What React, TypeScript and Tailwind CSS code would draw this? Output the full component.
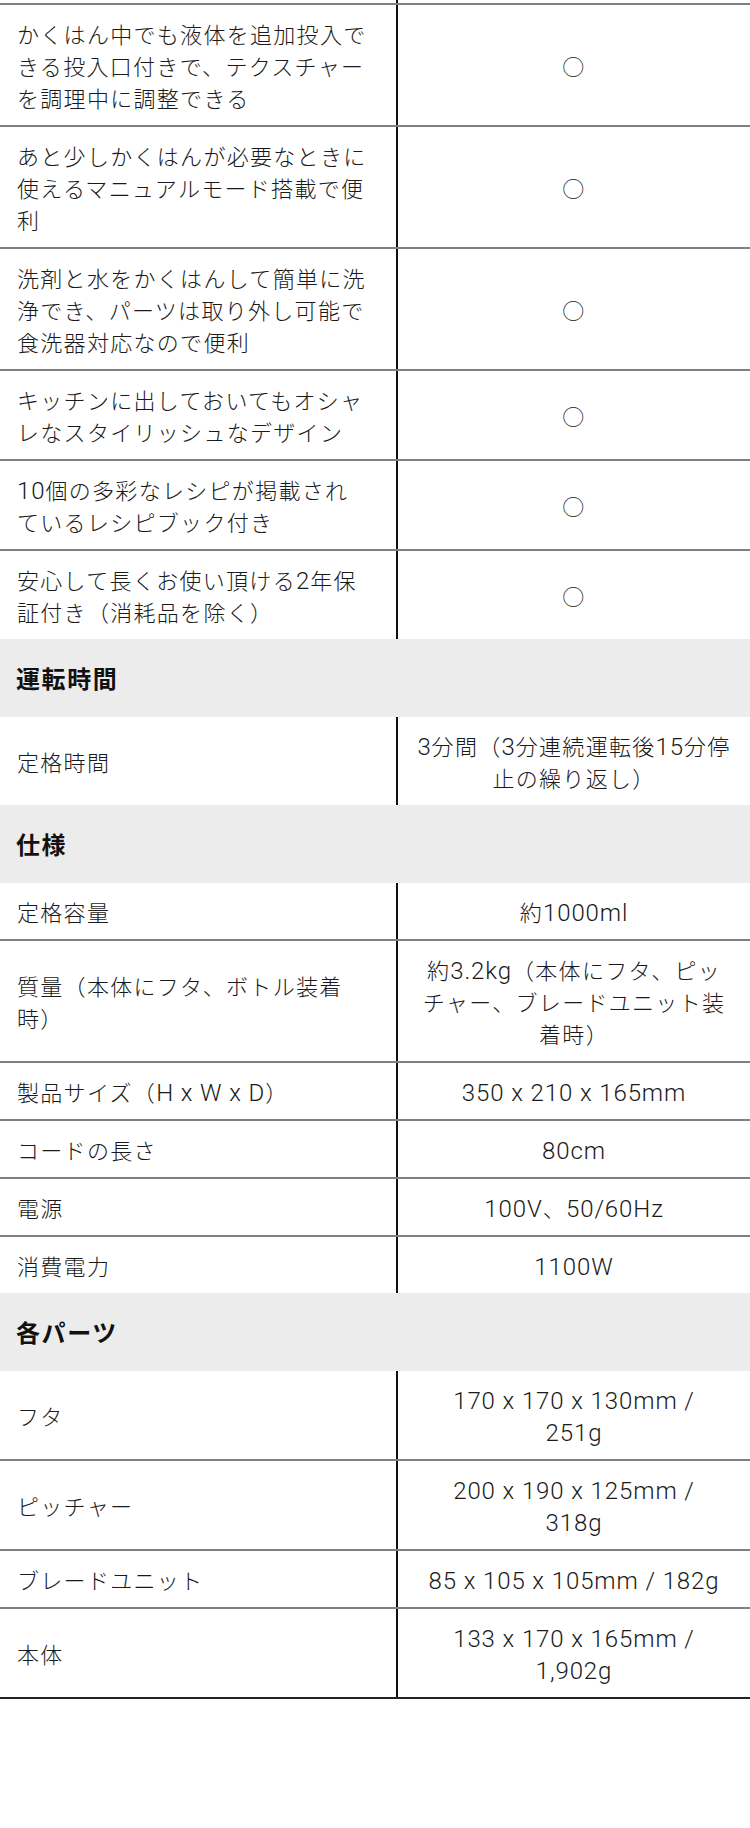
import React from 'react';

type Row =
  | { kind: 'header'; title: string }
  | { kind: 'row'; label: string[]; value: string[]; last?: boolean; noBorder?: boolean };

const ROWS: Row[] = [
  {
    kind: 'row',
    label: ['かくはん中でも液体を追加投入で', 'きる投入口付きで、テクスチャー', 'を調理中に調整できる'],
    value: ['○'],
  },
  {
    kind: 'row',
    label: ['あと少しかくはんが必要なときに', '使えるマニュアルモード搭載で便', '利'],
    value: ['○'],
  },
  {
    kind: 'row',
    label: ['洗剤と水をかくはんして簡単に洗', '浄でき、パーツは取り外し可能で', '食洗器対応なので便利'],
    value: ['○'],
  },
  {
    kind: 'row',
    label: ['キッチンに出しておいてもオシャ', 'レなスタイリッシュなデザイン'],
    value: ['○'],
  },
  {
    kind: 'row',
    label: ['10個の多彩なレシピが掲載され', 'ているレシピブック付き'],
    value: ['○'],
  },
  {
    kind: 'row',
    label: ['安心して長くお使い頂ける2年保', '証付き（消耗品を除く）'],
    value: ['○'],
    noBorder: true,
  },
  { kind: 'header', title: '運転時間' },
  {
    kind: 'row',
    label: ['定格時間'],
    value: ['3分間（3分連続運転後15分停', '止の繰り返し）'],
    noBorder: true,
  },
  { kind: 'header', title: '仕様' },
  { kind: 'row', label: ['定格容量'], value: ['約1000ml'] },
  {
    kind: 'row',
    label: ['質量（本体にフタ、ボトル装着', '時）'],
    value: ['約3.2kg（本体にフタ、ピッ', 'チャー、ブレードユニット装', '着時）'],
  },
  { kind: 'row', label: ['製品サイズ（H x W x D）'], value: ['350 x 210 x 165mm'] },
  { kind: 'row', label: ['コードの長さ'], value: ['80cm'] },
  { kind: 'row', label: ['電源'], value: ['100V、50/60Hz'] },
  { kind: 'row', label: ['消費電力'], value: ['1100W'], noBorder: true },
  { kind: 'header', title: '各パーツ' },
  { kind: 'row', label: ['フタ'], value: ['170 x 170 x 130mm /', '251g'] },
  { kind: 'row', label: ['ピッチャー'], value: ['200 x 190 x 125mm /', '318g'] },
  { kind: 'row', label: ['ブレードユニット'], value: ['85 x 105 x 105mm / 182g'] },
  { kind: 'row', label: ['本体'], value: ['133 x 170 x 165mm /', '1,902g'], last: true },
];

// 英数字だけ Roboto Light で少し大きめに
function Mixed({ text }: { text: string }) {
  const parts = text.split(/([\x20-\x7E]+)/).filter((p) => p !== '');
  return (
    <>
      {parts.map((p, i) =>
        /^[\x20-\x7E]+$/.test(p) ? (
          <span
            key={i}
            className="text-[24px] leading-[20px] tracking-[0.9px]"
            style={{ fontFamily: 'Roboto, "Liberation Sans", sans-serif' }}
          >
            {p}
          </span>
        ) : (
          <span key={i}>{p}</span>
        )
      )}
    </>
  );
}

function Lines({ lines }: { lines: string[] }) {
  return (
    <>
      {lines.map((l, i) => (
        <span key={i} className="block h-[32px] whitespace-nowrap">
          <Mixed text={l} />
        </span>
      ))}
    </>
  );
}

export default function App() {
  return (
    <div
      className="min-h-[1828px] w-[750px] bg-white text-[22px] leading-[32px] font-light tracking-[1.3px] text-[#1a1a1a]"
      style={{ fontFamily: '"Noto Sans CJK JP", sans-serif' }}
    >
      {/* 前の行の続き */}
      <div className="flex h-[5px] border-b-2 border-[#808080]">
        <div className="w-[398px] border-r-2 border-[#111]" />
      </div>

      {ROWS.map((r, i) =>
        r.kind === 'header' ? (
          <div key={i} className="flex h-[78px] items-center bg-[#ececec] pl-[16px]">
            <span className="text-[24px] font-bold tracking-[1.6px] text-[#111]">{r.title}</span>
          </div>
        ) : (
          <div
            key={i}
            className={
              'flex ' +
              (r.last
                ? 'border-b-2 border-[#222]'
                : r.noBorder
                  ? ''
                  : 'border-b-2 border-[#808080]')
            }
          >
            <div className="flex w-[398px] shrink-0 items-center border-r-2 border-[#111] py-3 pl-[17px] pr-4">
              <div>
                <Lines lines={r.label} />
              </div>
            </div>
            <div className="flex flex-1 items-center justify-center px-2 py-3 text-center">
              <div>
                <Lines lines={r.value} />
              </div>
            </div>
          </div>
        )
      )}
    </div>
  );
}
